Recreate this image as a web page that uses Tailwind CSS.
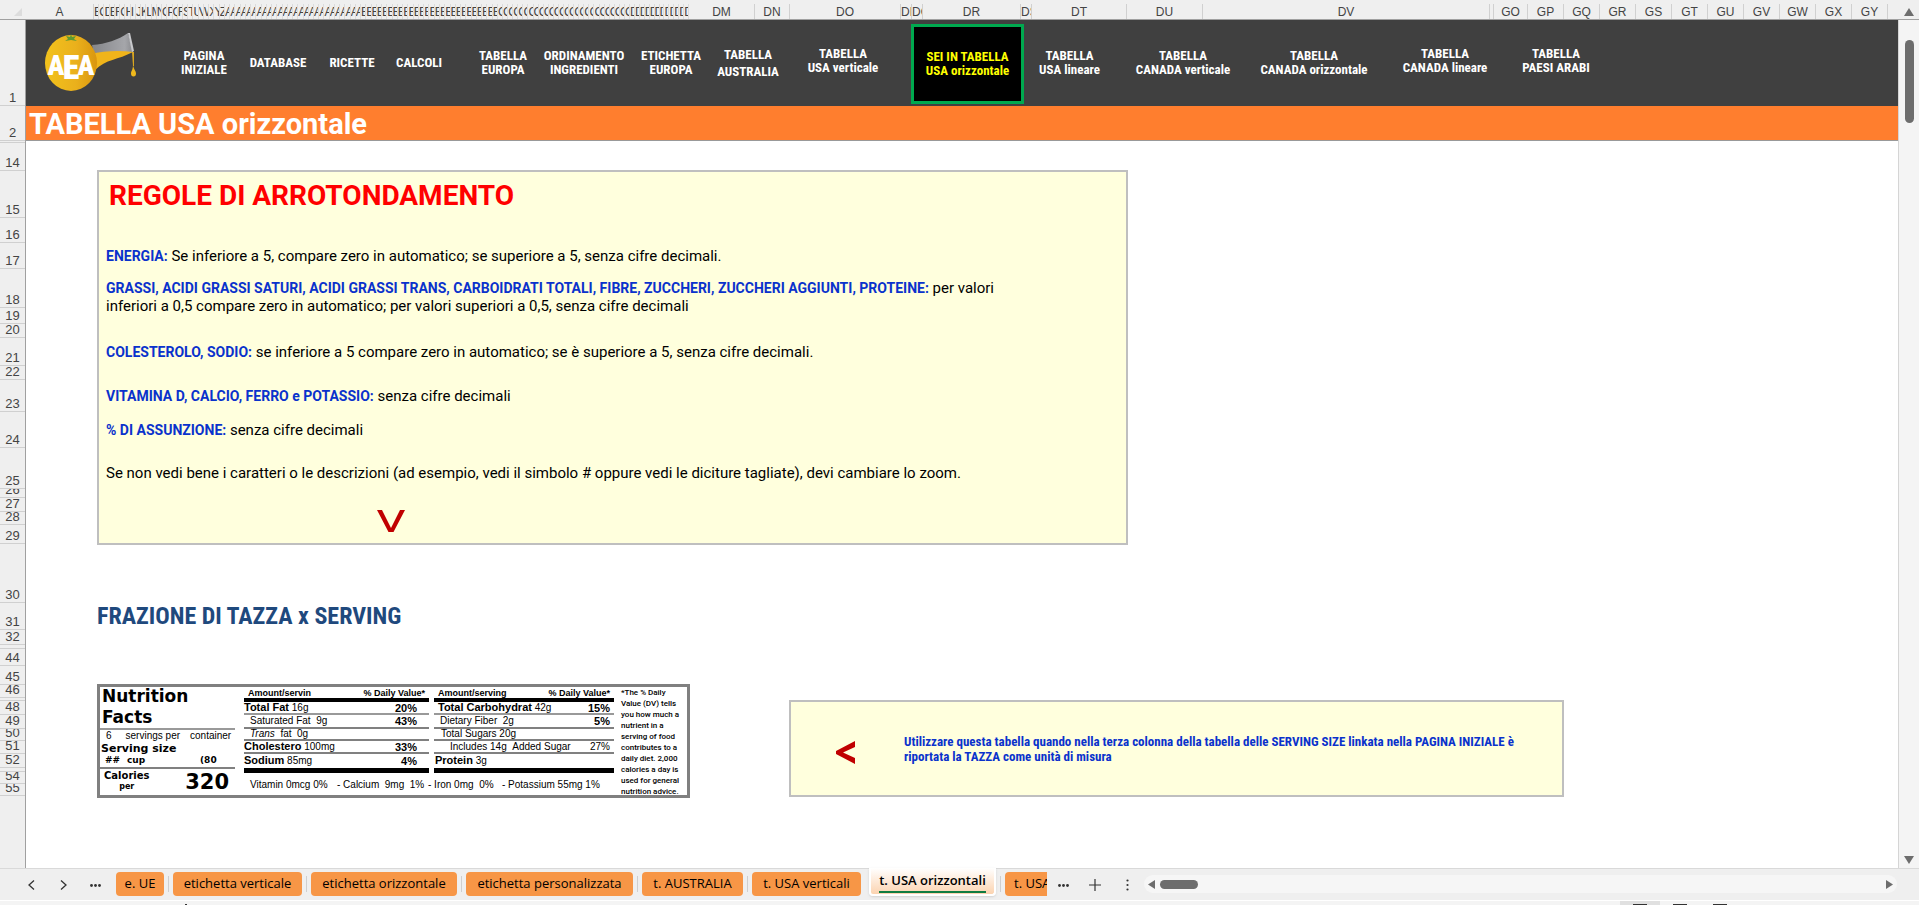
<!DOCTYPE html>
<html lang="it">
<head>
<meta charset="utf-8">
<title>Tabella USA orizzontale</title>
<script src="https://cdn.jsdelivr.net/npm/@tailwindcss/browser@4"></script>
</head>
<body class="bg-[#efefef]">
<div class="flex h-screen flex-col overflow-hidden font-['Roboto',sans-serif] text-black">

  <!-- Column headings -->
  <div class="flex h-5 shrink-0 border-b border-[#a0a0a0] font-['Liberation_Sans',sans-serif] text-[12px] text-[#444]">
    <div class="flex w-[26px] shrink-0 items-end justify-end pr-1 pb-[3px]"><svg width="8" height="8" viewBox="0 0 8 8"><path d="M8 0V8H0Z" fill="#dcdcdc"/></svg></div>
    <div id="cols" class="flex min-w-0 flex-1 overflow-hidden pt-1 leading-4"></div>
  </div>

  <div class="flex min-h-0 flex-1">
    <!-- Row headings -->
    <div id="rows" class="flex w-[26px] shrink-0 flex-col border-r border-[#a0a0a0] font-['Liberation_Sans',sans-serif] text-[13px] leading-[14px] text-[#444]"></div>

    <!-- Sheet -->
    <main class="min-w-0 flex-1 overflow-hidden bg-white">
      <nav class="flex h-[86px] items-stretch bg-[#404040] text-center font-['Roboto_Condensed','Roboto',sans-serif] text-[13px] leading-[14px] font-bold whitespace-nowrap text-white">
        <a href="#" aria-label="AEA" class="w-[146px] shrink-0 pt-3 pl-[18px]">
          <svg width="94" height="62" viewBox="0 0 94 62">
            <defs>
              <linearGradient id="g1" x1="0" x2="1" y1="0" y2="0"><stop offset="0" stop-color="#f2c21c"/><stop offset=".6" stop-color="#eab01c"/><stop offset="1" stop-color="#d9960f"/></linearGradient>
              <linearGradient id="g2" x1="0" x2="1" y1="0" y2="0"><stop offset="0" stop-color="#85868a"/><stop offset=".8" stop-color="#a5a6aa"/><stop offset="1" stop-color="#8a8b8f"/></linearGradient>
            </defs>
            <path d="M48 13C62 12 74 8 84 1L89 20C76 21 64 24 52 32Z" fill="url(#g2)"/>
            <path d="M84 1L86 1L90 19L88 20Z" fill="#c8c9cc"/>
            <path d="M46 22C60 19 74 18 89 20C74 28 62 27 51 38Z" fill="#f0b41a"/>
            <path d="M88 20H90V34H89Z" fill="#d9a520"/>
            <path d="M89 33C90 38 92 39 92 41.500A2.500 3 0 0 1 87 41.500C87 39 89 38 89 33Z" fill="#efb81c"/>
            <ellipse cx="27" cy="31" rx="26" ry="28" fill="url(#g1)"/>
            <path d="M27 2L28 5L32 4L30 7L33 9L27 8L21 9L24 7L22 4L26 5Z" fill="#5d9a32"/>
            <g fill="#fff" font-family="Roboto Condensed, Roboto, sans-serif" font-weight="900" text-anchor="middle">
              <text x="12" y="43" font-size="28">A</text><text x="27" y="47" font-size="34">E</text><text x="42" y="43" font-size="28">A</text>
            </g>
          </svg>
        </a>
        <a href="#" class="flex w-16 items-center justify-center">PAGINA<br>INIZIALE</a>
        <a href="#" class="flex w-[84px] items-center justify-center">DATABASE</a>
        <a href="#" class="flex w-16 items-center justify-center">RICETTE</a>
        <a href="#" class="mr-2.5 flex w-[70px] items-center justify-center">CALCOLI</a>
        <a href="#" class="flex w-[78px] items-center justify-center">TABELLA<br>EUROPA</a>
        <a href="#" class="flex w-[84px] items-center justify-center">ORDINAMENTO<br>INGREDIENTI</a>
        <a href="#" class="flex w-[90px] items-center justify-center">ETICHETTA<br>EUROPA</a>
        <a href="#" class="flex w-16 items-center justify-center leading-[17px]">TABELLA<br>AUSTRALIA</a>
        <a href="#" class="mr-[5px] flex w-[126px] items-center justify-center pb-1">TABELLA<br>USA verticale</a>
        <a href="#" class="my-1 mb-0.5 flex w-[113px] items-center justify-center border-3 border-[#00a94f] bg-black text-[#ff0]">SEI IN TABELLA<br>USA orizzontale</a>
        <a href="#" class="flex w-[91px] items-center justify-center">TABELLA<br>USA lineare</a>
        <a href="#" class="flex w-[136px] items-center justify-center">TABELLA<br>CANADA verticale</a>
        <a href="#" class="flex w-[126px] items-center justify-center">TABELLA<br>CANADA orizzontale</a>
        <a href="#" class="flex w-[136px] items-center justify-center pb-1">TABELLA<br>CANADA lineare</a>
        <a href="#" class="flex w-[86px] items-center justify-center pb-1">TABELLA<br>PAESI ARABI</a>
      </nav>
      <h1 class="h-[35px] border-b border-[#999] bg-[#ff7e2e] pl-[3px] text-[29px] leading-[36px] font-bold text-white">TABELLA USA orizzontale</h1>

      <section class="mt-[29px] ml-[71px] h-[375px] max-w-[1031px] border-2 border-[#bfbfbf] bg-[#ffffdd] pt-2 pl-[7px] text-[15px] leading-[18px]">
        <h2 class="pl-[3px] text-[28px] leading-8 font-bold text-[#f00]">REGOLE DI ARROTONDAMENTO</h2>
        <p class="mt-[35px]"><b class="text-[14px] text-[#0a32cc]">ENERGIA:</b> Se inferiore a 5, compare zero in automatico; se superiore a 5, senza cifre decimali.</p>
        <p class="mt-3.5"><b class="text-[14px] text-[#0a32cc]">GRASSI, ACIDI GRASSI SATURI, ACIDI GRASSI TRANS, CARBOIDRATI TOTALI, FIBRE, ZUCCHERI, ZUCCHERI AGGIUNTI, PROTEINE:</b> per valori<br>inferiori a 0,5 compare zero in automatico; per valori superiori a 0,5, senza cifre decimali</p>
        <p class="mt-7"><b class="text-[14px] text-[#0a32cc]">COLESTEROLO, SODIO:</b> se inferiore a 5 compare zero in automatico; se è superiore a 5, senza cifre decimali.</p>
        <p class="mt-[26px]"><b class="text-[14px] text-[#0a32cc]">VITAMINA D, CALCIO, FERRO e POTASSIO:</b> senza cifre decimali</p>
        <p class="mt-4"><b class="text-[14px] text-[#0a32cc]">% DI ASSUNZIONE:</b> senza cifre decimali</p>
        <p class="mt-[25px]">Se non vedi bene i caratteri o le descrizioni (ad esempio, vedi il simbolo # oppure vedi le diciture tagliate), devi cambiare lo zoom.</p>
        <svg class="mt-7 ml-[271px]" width="28" height="22" viewBox="0 0 28 22"><path d="M0 0H5L14 18L23 0H28L16.500 22H11.500Z" fill="#c00000"/></svg>
      </section>

      <h2 class="mt-[57px] ml-[71px] font-['Roboto_Condensed','Roboto',sans-serif] text-[24px] leading-7 font-bold text-[#1f497d]">FRAZIONE DI TAZZA x SERVING</h2>

      <div class="mt-[54px] ml-[71px] flex items-start">
        <!-- Nutrition facts label -->
        <section class="flex h-[114px] w-[593px] shrink-0 border-3 border-[#808080] bg-white font-['Liberation_Sans',sans-serif] text-[10px] leading-3 whitespace-nowrap">
          <div class="w-[135px]">
            <h3 class="h-[43px] border-b-2 border-[#999] pl-0.5 font-['DejaVu_Sans',sans-serif] text-[17px] leading-[23px] font-bold"><span class="block h-[19px] leading-[18px]">Nutrition</span>Facts</h3>
            <p class="flex h-3 gap-2.5 pl-1.5"><span>6</span><span class="pl-1">servings per</span><span>container</span></p>
            <p class="h-[13px] pl-px font-['DejaVu_Sans',sans-serif] text-[11px] leading-[13px] font-bold">Serving size</p>
            <p class="flex h-[14px] border-b-2 border-[#808080] pl-[5px] font-['DejaVu_Sans',sans-serif] text-[9px] leading-[11px] font-bold"><span class="w-[22px]">##</span><span class="w-[73px]">cup</span><span>(80</span></p>
            <div class="flex justify-between pr-1.5 pl-1 font-['DejaVu_Sans',sans-serif] font-bold">
              <p class="text-center text-[10px] leading-[13px]">Calories<br><span class="block text-[8px] leading-[10px]">per</span></p>
              <p class="text-[21px] leading-[26px]">320</p>
            </div>
          </div>
          <div class="ml-[9px] w-[370px] shrink-0">
            <div class="flex gap-[5px] leading-[8px]">
              <table class="w-[185px] shrink-0 table-fixed border-collapse">
                <tr class="h-[13px] border-b-4 border-black text-[9px] font-bold"><th class="w-[100px] p-0 pl-1 text-left">Amount/servin</th><th class="p-0 pr-1 text-right">% Daily Value*</th></tr>
                <tr class="h-[14px] border-b-2 border-[#999]"><td class="p-0"><b class="text-[11px]">Total Fat</b> 16g</td><td class="p-0 pr-3 text-right text-[11px] font-bold">20%</td></tr>
                <tr class="h-[14px] border-b-2 border-[#808080]"><td class="p-0 pl-1.5">Saturated Fat &nbsp;9g</td><td class="p-0 pr-3 text-right text-[11px] font-bold">43%</td></tr>
                <tr class="h-[12px] border-b-2 border-[#808080]"><td class="p-0 pl-1.5"><i>Trans</i> &nbsp;fat &nbsp;0g</td><td class="p-0"></td></tr>
                <tr class="h-[13px] border-b-2 border-[#808080]"><td class="p-0"><b class="text-[11px]">Cholestero</b> 100mg</td><td class="p-0 pr-3 text-right text-[11px] font-bold">33%</td></tr>
                <tr class="h-[17px] border-b-5 border-black"><td class="p-0"><b class="text-[11px]">Sodium</b> 85mg</td><td class="p-0 pr-3 text-right text-[11px] font-bold">4%</td></tr>
              </table>
              <table class="w-[180px] shrink-0 table-fixed border-collapse">
                <tr class="h-[13px] border-b-4 border-black text-[9px] font-bold"><th class="w-[100px] p-0 pl-1 text-left">Amount/serving</th><th class="p-0 pr-1 text-right">% Daily Value*</th></tr>
                <tr class="h-[14px] border-b-2 border-[#999]"><td class="p-0 pl-1"><b class="text-[11px]">Total Carbohydrat</b> 42g</td><td class="p-0 pr-1 text-right text-[11px] font-bold">15%</td></tr>
                <tr class="h-[14px] border-b-2 border-[#808080]"><td class="p-0 pl-1.5">Dietary Fiber &nbsp;2g</td><td class="p-0 pr-1 text-right text-[11px] font-bold">5%</td></tr>
                <tr class="h-[12px] border-b-2 border-[#808080]"><td class="p-0 pl-[7px]">Total Sugars 20g</td><td class="p-0"></td></tr>
                <tr class="h-[13px] border-b-2 border-[#808080]"><td class="p-0 pl-4">Includes 14g &nbsp;Added Sugar</td><td class="p-0 pr-1 text-right">27%</td></tr>
                <tr class="h-[17px] border-b-5 border-black"><td class="p-0 pl-px"><b class="text-[11px]">Protein</b> 3g</td><td class="p-0"></td></tr>
              </table>
            </div>
            <p class="flex pt-1.5 pl-1.5"><span class="w-[87px]">Vitamin 0mcg 0%</span><span class="w-[91px]">- Calcium &nbsp;9mg &nbsp;1%</span><span class="w-[74px]">- Iron 0mg &nbsp;0%</span><span>- Potassium 55mg 1%</span></p>
          </div>
          <p class="ml-[7px] font-['Roboto',sans-serif] text-[8px] leading-[11px] font-medium">*The % Daily<br>Value (DV) tells<br>you how much a<br>nutrient in a<br>serving of food<br>contributes to a<br>daily diet. 2,000<br>calories a day is<br>used for general<br>nutrition advice.</p>
        </section>

        <section class="mt-4 ml-[99px] flex h-[97px] w-[775px] items-center gap-12 border-2 border-[#bfbfbf] bg-[#ffffdd] pl-[45px]">
          <svg class="mt-2" width="20" height="23" viewBox="0 0 20 23"><path d="M19 0V6L7 11.500L19 17V23L0 13V10Z" fill="#c00000"/></svg>
          <p class="font-['Roboto_Condensed','Roboto',sans-serif] text-[13px] leading-[15px] font-bold text-[#0a32cc]">Utilizzare questa tabella quando nella terza colonna della tabella delle SERVING SIZE linkata nella PAGINA INIZIALE è<br>riportata la TAZZA come unità di misura</p>
        </section>
      </div>
    </main>

    <!-- Vertical scrollbar -->
    <div class="flex w-[21px] shrink-0 flex-col items-center justify-between border-l border-[#d5d5d5] bg-[#f4f4f4]">
      <div class="flex flex-col items-center gap-6">
        <svg class="-mt-3" width="10" height="8" viewBox="0 0 10 8"><path d="M5 0L10 8H0Z" fill="#6d6d6d"/></svg>
        <div class="h-[83px] w-[9px] rounded-full bg-[#6d6d6d]"></div>
      </div>
      <svg class="mb-1" width="10" height="8" viewBox="0 0 10 8"><path d="M5 8L10 0H0Z" fill="#6d6d6d"/></svg>
    </div>
  </div>

  <!-- Sheet tabs -->
  <div class="flex h-8 shrink-0 items-start border-t border-[#d9d9d9] font-['Open_Sans',sans-serif] text-[13px] whitespace-nowrap">
    <div class="flex h-7 w-[116px] shrink-0 items-center pt-1 pl-[15px]">
      <button aria-label="Precedente" class="flex w-8 justify-center"><svg width="7" height="10" viewBox="0 0 7 10" fill="none" stroke="#333" stroke-width="1.300"><path d="M6 0.500L1 5L6 9.500"/></svg></button>
      <button aria-label="Successivo" class="flex w-8 justify-center"><svg width="7" height="10" viewBox="0 0 7 10" fill="none" stroke="#333" stroke-width="1.300"><path d="M1 0.500L6 5L1 9.500"/></svg></button>
      <button aria-label="Altri fogli" class="flex w-8 justify-center"><svg width="11" height="3" viewBox="0 0 11 3" fill="#333"><circle cx="1.500" cy="1.500" r="1.400"/><circle cx="5.500" cy="1.500" r="1.400"/><circle cx="9.500" cy="1.500" r="1.400"/></svg></button>
    </div>
    <button class="mt-[3px] h-6 w-12 shrink-0 rounded bg-[#f79646]">e. UE</button>
    <span class="mx-1 mt-[7px] h-4 w-px bg-[#cfcfcf]"></span>
    <button class="mt-[3px] h-6 w-[129px] shrink-0 rounded bg-[#f79646]">etichetta verticale</button>
    <span class="mx-1 mt-[7px] h-4 w-px bg-[#cfcfcf]"></span>
    <button class="mt-[3px] h-6 w-[146px] shrink-0 rounded bg-[#f79646]">etichetta orizzontale</button>
    <span class="mx-1 mt-[7px] h-4 w-px bg-[#cfcfcf]"></span>
    <button class="mt-[3px] h-6 w-[167px] shrink-0 rounded bg-[#f79646]">etichetta personalizzata</button>
    <span class="mx-1 mt-[7px] h-4 w-px bg-[#cfcfcf]"></span>
    <button class="mt-[3px] h-6 w-[101px] shrink-0 rounded bg-[#f79646]">t. AUSTRALIA</button>
    <span class="mx-1 mt-[7px] h-4 w-px bg-[#cfcfcf]"></span>
    <button class="mt-[3px] h-6 w-[109px] shrink-0 rounded bg-[#f79646]">t. USA verticali</button>
    <button class="-mt-px ml-2 h-7 w-[127px] shrink-0 rounded-b border-2 border-t-0 border-white bg-linear-to-b from-white to-[#fbd3b0] font-semibold shadow"><span class="inline-block border-b-2 border-[#107c41] leading-[22px]">t. USA orizzontali</span></button>
    <span class="mx-1 mt-[7px] h-4 w-px bg-[#cfcfcf]"></span>
    <button class="mt-[3px] h-6 w-[42px] shrink-0 overflow-hidden rounded-l bg-[#f79646] pl-[9px] text-left">t. USA</button>
    <div class="flex h-7 w-[97px] shrink-0 items-center pt-1">
      <button aria-label="Altri fogli a destra" class="flex w-8 justify-center"><svg width="11" height="3" viewBox="0 0 11 3" fill="#333"><circle cx="1.500" cy="1.500" r="1.400"/><circle cx="5.500" cy="1.500" r="1.400"/><circle cx="9.500" cy="1.500" r="1.400"/></svg></button>
      <button aria-label="Nuovo foglio" class="flex w-8 justify-center"><svg width="12" height="12" viewBox="0 0 12 12" stroke="#333" stroke-width="1.200"><path d="M6 0V12M0 6H12"/></svg></button>
      <span class="flex w-8 justify-center"><svg width="3" height="12" viewBox="0 0 3 12" fill="#333"><circle cx="1.500" cy="1.500" r="1.100"/><circle cx="1.500" cy="6" r="1.100"/><circle cx="1.500" cy="10.500" r="1.100"/></svg></span>
    </div>
    <div class="mt-1.5 mr-[22px] flex h-[18px] flex-1 items-center rounded-full bg-[#f6f6f6] pr-1 pl-1">
      <svg width="7" height="9" viewBox="0 0 7 9"><path d="M0 4.500L7 0V9Z" fill="#6d6d6d"/></svg>
      <div class="ml-[5px] h-[9px] w-[38px] rounded-full bg-[#6d6d6d]"></div>
      <svg class="ml-auto" width="7" height="9" viewBox="0 0 7 9"><path d="M7 4.500L0 0V9Z" fill="#6d6d6d"/></svg>
    </div>
  </div>

  <!-- Status bar, cut by the window's lower edge -->
  <div class="flex h-[5px] shrink-0 items-end border-t border-white bg-[#f4f4f4]">
    <span class="ml-[185px] h-px w-0.5 bg-[#333]"></span>
    <span class="mr-[179px] ml-auto flex h-full items-end">
      <span class="flex h-full w-10 items-end justify-center bg-[#e0e0e0]"><i class="h-px w-[14px] bg-[#333]"></i></span>
      <span class="flex w-10 justify-center"><i class="h-px w-[14px] bg-[#333]"></i></span>
      <span class="flex w-10 justify-center"><i class="h-px w-[14px] bg-[#333]"></i></span>
    </span>
  </div>
</div>

<script>
  const letters = 'ABCDEFGHIJKLMNOPQRSTUVWXYZ'.split('');
  const cols = document.getElementById('cols');
  const wide = (label, width) => {
    const el = document.createElement('div');
    el.className = 'shrink-0 overflow-hidden border-r border-[#d0d0d0] text-center';
    el.style.width = width + 'px';
    el.textContent = label;
    cols.append(el);
  };
  // Runs of narrow columns share the width of their group equally.
  const narrow = (labels, width) => {
    const group = document.createElement('div');
    group.className = 'flex shrink-0';
    group.style.width = width + 'px';
    for (const label of labels) {
      const el = document.createElement('div');
      el.className = 'min-w-0 flex-1 overflow-hidden border-r border-[#dcdcdc]';
      el.textContent = label;
      group.append(el);
    }
    cols.append(group);
  };
  wide('A', 68);
  narrow(letters.slice(1), 131);
  narrow(letters.map(l => 'A' + l), 136);
  narrow(letters.map(l => 'B' + l), 137);
  narrow(letters.map(l => 'C' + l), 132);
  narrow(letters.slice(0, 12).map(l => 'D' + l), 59);
  [['DM',66],['DN',35],['DO',111],['DP',11],['DQ',11],['DR',98],['DS',11],['DT',95],['DU',76],['DV',287],['',4],['GO',34],
   ['GP',36],['GQ',36],['GR',36],['GS',36],['GT',36],['GU',36],['GV',36],['GW',36],['GX',36],['GY',36]].forEach(c => wide(...c));

  const rows = document.getElementById('rows');
  [['1',86],['2',35],['',2],['14',28],['15',47],['16',25],['17',26],['18',39],['19',16],['20',14],['21',28],['22',14],['23',32],
   ['24',36],['25',41],['26',9],['27',14],['28',13],['29',19],['30',59],['31',27],['32',15],['',4],['44',17],['45',19],['46',13],
   ['',3],['48',14],['49',14],['50',12],['51',13],['52',14],['',4],['54',12],['55',12]].forEach(([label, height]) => {
    const el = document.createElement('div');
    el.className = 'flex shrink-0 items-end justify-center overflow-hidden border-b border-[#d0d0d0]';
    el.style.height = height + 'px';
    el.textContent = label;
    rows.append(el);
  });
</script>
</body>
</html>
